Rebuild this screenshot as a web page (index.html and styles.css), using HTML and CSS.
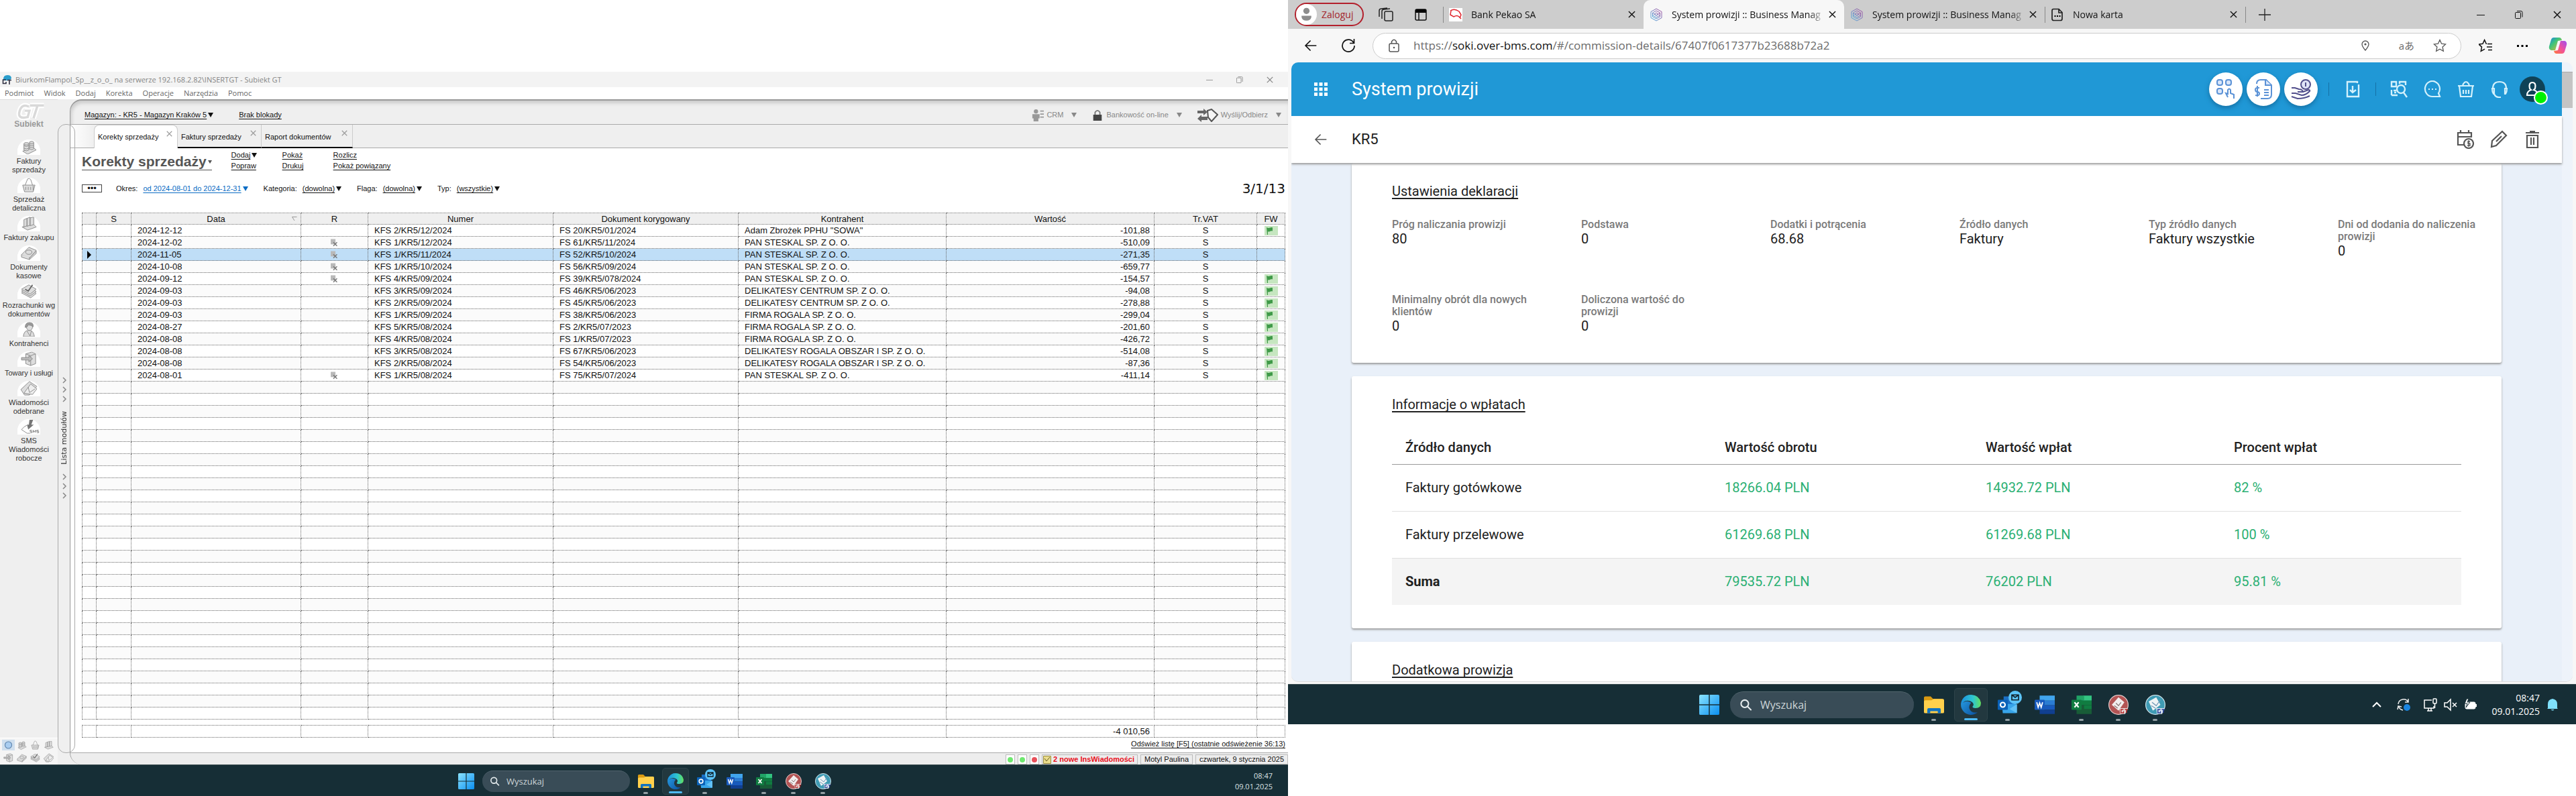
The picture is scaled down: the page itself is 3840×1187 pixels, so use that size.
FILE: index.html
```html
<!DOCTYPE html>
<html lang="pl">
<head>
<meta charset="utf-8">
<title>Pulpit</title>
<link rel="stylesheet" href="styles.css">
</head>
<body>
<svg class="defs" aria-hidden="true">
  <defs>
    <linearGradient id="win" x1="0" y1="0" x2="1" y2="1"><stop offset="0" stop-color="#8be3ff"/><stop offset="1" stop-color="#0a8ff0"/></linearGradient>
    <linearGradient id="edgeA" x1="0" y1="0" x2="1" y2="0"><stop offset="0" stop-color="#1b8fe0"/><stop offset=".6" stop-color="#2fc6cf"/><stop offset="1" stop-color="#63e05c"/></linearGradient>
    <linearGradient id="edgeB" x1="0" y1="0" x2="1" y2="1"><stop offset="0" stop-color="#2aa5ea"/><stop offset="1" stop-color="#0b4f9e"/></linearGradient>
    <linearGradient id="cop" x1="0" y1="0" x2="1" y2="1"><stop offset="0" stop-color="#1b7fe8"/><stop offset=".4" stop-color="#3fc47a"/><stop offset="1" stop-color="#f5b82e"/></linearGradient>
    <linearGradient id="cop2" x1="1" y1="0" x2="0" y2="1"><stop offset="0" stop-color="#a04df0"/><stop offset=".5" stop-color="#f0509c"/><stop offset="1" stop-color="#ff7a3a"/></linearGradient>
    <linearGradient id="hex" x1="0" y1="1" x2="1" y2="0"><stop offset="0" stop-color="#4cb2e0"/><stop offset="1" stop-color="#a3489c"/></linearGradient>
  </defs>
  <symbol id="i-win" viewBox="0 0 24 24"><path fill="url(#win)" d="M0 1.500Q0 0 1.500 0H11.400V11.400H0zM12.600 0H22.500Q24 0 24 1.500V11.400H12.600zM0 12.600H11.400V24H1.500Q0 24 0 22.500zM12.600 12.600H24V22.500Q24 24 22.500 24H12.600z"/></symbol>
  <symbol id="i-search" viewBox="0 0 24 24"><g fill="none" stroke="#e6ecee" stroke-width="2.600" stroke-linecap="round"><circle cx="10" cy="10" r="7"/><path d="M15.500 15.500L21.500 21.500"/></g></symbol>
  <symbol id="i-folder" viewBox="0 0 24 24"><path fill="#d99a12" d="M0 3.500Q0 2 1.500 2H8l3 3H22v6H0z"/><path fill="#ffd04c" d="M0 8Q0 6.500 2 6.500H9L11.500 5H22.500Q24 5 24 6.500V20.500Q24 22 22.500 22H1.500Q0 22 0 20.500z"/><path fill="#1173c0" d="M4 22V17.500Q4 16 5.500 16H18.500Q20 16 20 17.500V22H16.500V19.500H7.500V22z"/></symbol>
  <symbol id="i-edge" viewBox="0 0 24 24"><path fill="url(#edgeB)" d="M12 0A12 12 0 1 0 20 21Q12 22.500 10 16Q9.500 12 12.500 9.500Q6 5.500 1 11z"/><path fill="url(#edgeA)" d="M.3 10.500Q2.500 0 12.500 0Q22 .5 24 9.500Q24 16 17.500 16Q13.500 15.800 14 14Q16.500 11.500 13.500 8.700Q7 4.500.3 10.500z"/></symbol>
  <symbol id="i-outlook" viewBox="0 0 24 24"><path fill="#1a6fc4" d="M7 2H21V12H7z"/><path fill="#38a5ea" d="M5 11L22 11V22H6z"/><path fill="#61c1f5" d="M14 17L23 11V22z"/><rect y="6" width="12" height="12" rx="1" fill="#0a62b8"/><circle cx="6" cy="12" r="2.800" fill="none" stroke="#fff" stroke-width="1.700"/></symbol>
  <symbol id="i-word" viewBox="0 0 24 24"><path fill="#41a5ee" d="M6 1H24V7H6z"/><path fill="#2b7cd3" d="M6 7H24V12.500H6z"/><path fill="#185abd" d="M6 12.500H24V18H6z"/><path fill="#103f91" d="M6 18H24V23H6z"/><rect y="6" width="12" height="12" rx="1" fill="#185abd"/><path d="M2.500 9l1.700 6L6 9.800 7.800 15l1.700-6" fill="none" stroke="#fff" stroke-width="1.400"/></symbol>
  <symbol id="i-excel" viewBox="0 0 24 24"><path fill="#33c481" d="M14 1H24V7H14z"/><path fill="#21a366" d="M6 1H15V7H6z"/><path fill="#107c41" d="M6 7H24V12.500H6z"/><path fill="#185c37" d="M6 12.500H24V23H6z"/><path fill="#107c41" d="M15 12.500H24V17H15z"/><rect y="6" width="12" height="12" rx="1" fill="#107c41"/><path d="M3.500 9l5 6M8.500 9l-5 6" stroke="#fff" stroke-width="1.700"/></symbol>
  <symbol id="i-gtred" viewBox="0 0 24 24"><circle cx="12" cy="12" r="11.500" fill="#b35454" stroke="#e2cccc"/><path fill="#f2eeee" d="M4 12L12 3l7 6-7 10z"/><path d="M9 10l3 3 3-4M7 13l4 3" stroke="#8b7777" fill="none"/><path fill="#e8dada" d="M13 16h10l-3 7h-6z"/><path d="M18 17.500h-3v4h3v-2M19.500 17.500h4M21.500 17.500v4" stroke="#b32c2c" stroke-width="1.200" fill="none"/></symbol>
  <symbol id="i-gtblue" viewBox="0 0 24 24"><circle cx="12" cy="12" r="11.500" fill="#3f9bb4" stroke="#cfe3ea"/><path fill="#f0f4f5" d="M4 8l9-5 5 9-9 7z"/><path d="M8 9l5 4 5-7M7 13l5 3" stroke="#6e98b6" fill="none"/><path fill="#dde6f2" d="M13 16h10l-3 7h-6z"/><path d="M18 17.500h-3v4h3v-2M19.500 17.500h4M21.500 17.500v4" stroke="#273f94" stroke-width="1.200" fill="none"/></symbol>
  <symbol id="i-x" viewBox="0 0 12 12"><path d="M1 1l10 10M11 1L1 11" stroke="currentColor" stroke-width="1.500" fill="none"/></symbol>
  <symbol id="i-min" viewBox="0 0 12 12"><path d="M0 6.500h12" stroke="currentColor" fill="none"/></symbol>
  <symbol id="i-max" viewBox="0 0 12 12"><path d="M.5 3.500q0-1 1-1h6q1 0 1 1v7q0 1-1 1h-6q-1 0-1-1zM3 .5h6q2 0 2 2v7" stroke="currentColor" fill="none"/></symbol>
  <symbol id="i-hex" viewBox="0 0 20 20"><g fill="none" stroke="url(#hex)" stroke-width="1"><path d="M10 1l8 4.500v9L10 19l-8-4.500v-9z"/><path d="M10 4l5.500 3v6L10 16l-5.500-3V7z"/><path d="M5 8l5 3 5-3M5 11l5 3 5-3M10 7l3 2-3 2-3-2z"/></g></symbol>
  <symbol id="i-back" viewBox="0 0 24 24"><path d="M22 12H3M11.500 3L2.500 12l9 9" stroke="currentColor" stroke-width="2" fill="none"/></symbol>
  <symbol id="i-rx" viewBox="0 0 14 14"><path fill="#b9b9b9" d="M0 0h9v10H0z"/><path d="M5 6l7 7M12 6l-7 7" stroke="#777" stroke-width="1.800"/></symbol>
  <symbol id="i-flag" viewBox="0 0 20 14"><path fill="#c6e6c0" d="M0 0h20v14H0z"/><path fill="#3f9a48" d="M3 2q3 1.500 5 .5t4-.3v5.300q-2-.5-4 .5T5 8v5H4z"/></symbol>
  <symbol id="m-coins" viewBox="0 0 34 24"><g fill="#ddd" stroke="#888"><path d="M7 19l17-6 5 4-14 7z"/><path d="M9 7v10q4 3 8 0V7"/><ellipse cx="13" cy="7" rx="4" ry="2"/><path d="M18 5v10q4 3 7 0V5"/><ellipse cx="21.500" cy="5" rx="3.500" ry="2"/><path d="M9 10q4 3 8 0M9 14q4 3 8 0M18 9q4 2 7 0M18 12q4 2 7 0" fill="none"/></g></symbol>
  <symbol id="m-basket" viewBox="0 0 34 24"><g fill="#ddd" stroke="#888"><path d="M7 12h20l-3 11H10z"/><path d="M11 12L15 2q3-2 5 1l3 9" fill="none"/><path d="M12 15v5M16 15v5M20 15v5M24 13v8"/></g></symbol>
  <symbol id="m-docs" viewBox="0 0 34 24"><g fill="#ddd" stroke="#888"><path d="M6 18l18-5 5 5-14 5z"/><path d="M9 6l5-2v12l-5 2zM14 4l5-2v13l-5 2zM19 3l6-1v12l-6 2z"/></g></symbol>
  <symbol id="m-box" viewBox="0 0 34 24"><g fill="#ddd" stroke="#888"><path d="M5 15L17 3l12 5-11 13z"/><path d="M5 15v4l13 4v-4M18 21l11-12v4L18 23"/><ellipse cx="17" cy="11" rx="5" ry="3.500"/></g></symbol>
  <symbol id="m-check" viewBox="0 0 34 24"><g fill="#ddd" stroke="#888"><path d="M5 15l12-7 12 8-9 7z"/><path d="M5 12l12-7 12 8-10 7z"/><path d="M5 9l12-7 12 7-10 8z"/><path d="M11 9l5 3 7-10" fill="none" stroke="#666" stroke-width="2"/></g></symbol>
  <symbol id="m-person" viewBox="0 0 34 24"><g fill="#ddd" stroke="#888"><path d="M8 24q1-10 8-10h4q5 2 6 10z"/><ellipse cx="18" cy="8" rx="5" ry="6"/><path d="M11 9q0-8 7-8t6 7q-3-3-8-3-1 4-5 4z" fill="#999"/><path d="M14 15l5 8 2-8"/></g></symbol>
  <symbol id="m-goods" viewBox="0 0 34 24"><g fill="#ddd" stroke="#888"><path d="M12 4l10-3 6 3v16l-8 3-8-3z"/><path d="M12 4l8 3 8-3M20 7v16" fill="none"/><path d="M5 10h12v-3l6 5-6 5v-3H5z" fill="#bbb"/></g></symbol>
  <symbol id="m-mail" viewBox="0 0 34 24"><g fill="#ddd" stroke="#888"><path d="M4 14L18 1l12 8-12 14H10z"/><path d="M9 20L20 5l10 8-7 9z" fill="#eee"/><path d="M16 10l2 9 9-6" fill="none"/></g></symbol>
  <symbol id="m-sms" viewBox="0 0 34 24"><path d="M18 1h6l-3 8h4l-9 8-2-8h3z" fill="#777"/><path d="M5 17q5-6 9-7M5 17l9 6h5" fill="none" stroke="#888"/><path d="M22 18h-3v2h3v2h-3M24 22v-4l2 3 2-3v4M33 18h-3v2h3v2h-3" fill="none" stroke="#777"/></symbol>
</svg>

<main class="desk">
<section class="screen screen-left" aria-label="Subiekt GT">
  <header class="titlebar">
    <svg class="ic-14" viewBox="0 0 14 14"><path fill="#2a9dcc" d="M2 6q0-6 6-6t6 5l-3 3H2z"/><path d="M6 7H1.500v5.500H6V10M8 7.500h6M11 7.500V14" stroke="#334" stroke-width="1.600" fill="none"/></svg>
    <span class="titlebar-text">BiurkomFlampol_Sp__z_o_o_ na serwerze 192.168.2.82\INSERTGT - Subiekt GT</span>
    <div class="winbtns winbtns-sm"><button aria-label="Minimalizuj"><svg><use href="#i-min"/></svg></button><button aria-label="Przywróć"><svg><use href="#i-max"/></svg></button><button aria-label="Zamknij"><svg><use href="#i-x"/></svg></button></div>
  </header>
  <nav class="menubar"><a href="#">Podmiot</a><a href="#">Widok</a><a href="#">Dodaj</a><a href="#">Korekta</a><a href="#">Operacje</a><a href="#">Narzędzia</a><a href="#">Pomoc</a></nav>
  <div class="app">
    <aside class="modules">
      <div class="logo"><svg viewBox="0 0 60 30"><path d="M30 7q-12-6-16 8t14 10l3-11h-8M32 5h24M45 5l-7 22" fill="none" stroke="#fff" stroke-width="9"/><path d="M30 7q-12-6-16 8t14 10l3-11h-8M32 5h24M45 5l-7 22" fill="none" stroke="#d9d9d9" stroke-width="4"/></svg><b>Subiekt</b></div>
      <a class="module" href="#"><svg><use href="#m-coins"/></svg>Faktury<br>sprzedaży</a>
      <a class="module" href="#"><svg><use href="#m-basket"/></svg>Sprzedaż<br>detaliczna</a>
      <a class="module" href="#"><svg><use href="#m-docs"/></svg>Faktury zakupu</a>
      <a class="module" href="#"><svg><use href="#m-box"/></svg>Dokumenty<br>kasowe</a>
      <a class="module" href="#"><svg><use href="#m-check"/></svg>Rozrachunki wg<br>dokumentów</a>
      <a class="module" href="#"><svg><use href="#m-person"/></svg>Kontrahenci</a>
      <a class="module" href="#"><svg><use href="#m-goods"/></svg>Towary i usługi</a>
      <a class="module" href="#"><svg><use href="#m-mail"/></svg>Wiadomości<br>odebrane</a>
      <a class="module" href="#"><svg><use href="#m-sms"/></svg>SMS<br>Wiadomości<br>robocze</a>
      <div class="quick">
        <svg class="on" viewBox="0 0 34 24"><circle cx="17" cy="12" r="9" fill="#a9cdf0" stroke="#5b82ac" stroke-width="2"/></svg><svg><use href="#m-coins"/></svg><svg><use href="#m-basket"/></svg><svg><use href="#m-docs"/></svg><svg><use href="#m-goods"/></svg><svg><use href="#m-box"/></svg><svg><use href="#m-check"/></svg><svg><use href="#m-mail"/></svg>
      </div>
    </aside>
    <button class="strip"><svg class="chev" viewBox="0 0 8 38"><path d="M2 1l4 4-4 4M2 15l4 4-4 4M2 29l4 4-4 4" fill="none" stroke="#888" stroke-width="1.500"/></svg><span>Lista modułów</span><svg class="chev" viewBox="0 0 8 38"><path d="M2 1l4 4-4 4M2 15l4 4-4 4M2 29l4 4-4 4" fill="none" stroke="#888" stroke-width="1.500"/></svg></button>
    <div class="work">
      <div class="contextbar">
        <a class="lnk" href="#">Magazyn: - KR5 - Magazyn Kraków 5<i class="dn"></i></a>
        <a class="lnk" href="#">Brak blokady</a>
        <div class="ctx-right">
          <button><svg viewBox="0 0 20 20"><g fill="#999"><circle cx="7" cy="3.500" r="3.500"/><path d="M1 8h12v7h-2v5H3v-5H1z"/><path d="M14 2h6v2h-6zM14 7h6v2h-6zM14 12h6v2h-6z"/></g></svg>CRM<i class="dn"></i></button>
          <button><svg viewBox="0 0 20 20"><path d="M6 9V5q4-6 8 0v4" stroke="#777" stroke-width="2" fill="none"/><path d="M3 9h14v10H3z" fill="#444"/></svg>Bankowość on-line<i class="dn"></i></button>
          <button><svg class="wide" viewBox="0 0 32 20"><path d="M1 3h9V0l6 5-6 5V7H1zM16 12H7V9l-6 6 6 5v-3h9z" fill="#666"/><path d="M16 3l6-2 9 8-9 10-5-6z" fill="#f5f5f5" stroke="#555" stroke-width="2"/></svg>Wyślij/Odbierz<i class="dn"></i></button>
        </div>
      </div>
      <div class="doctabs">
        <a class="doctab active" href="#">Korekty sprzedaży<svg><use href="#i-x"/></svg></a>
        <a class="doctab" href="#">Faktury sprzedaży<svg><use href="#i-x"/></svg></a>
        <a class="doctab" href="#">Raport dokumentów<svg><use href="#i-x"/></svg></a>
      </div>
      <div class="doc">
        <div class="dochead">
          <h1>Korekty sprzedaży<i class="dn"></i></h1>
          <div class="actions"><a class="lnk" href="#">Dodaj<i class="dn"></i></a><a class="lnk" href="#">Pokaż</a><a class="lnk" href="#">Rozlicz</a><a class="lnk" href="#">Popraw</a><a class="lnk" href="#">Drukuj</a><a class="lnk" href="#">Pokaż powiązany</a></div>
        </div>
        <div class="filters">
          <button class="more">•••</button>
          <span>Okres:<a class="lnk blue" href="#">od 2024-08-01 do 2024-12-31<i class="dn"></i></a></span>
          <span>Kategoria:<a class="lnk" href="#">(dowolna)<i class="dn"></i></a></span>
          <span>Flaga:<a class="lnk" href="#">(dowolna)<i class="dn"></i></a></span>
          <span>Typ:<a class="lnk" href="#">(wszystkie)<i class="dn"></i></a></span>
          <span class="count">3/1/13</span>
        </div>
        <table class="grid">
          <colgroup><col class="c-a"><col class="c-b"><col class="c-c"><col class="c-d"><col class="c-e"><col class="c-e"><col class="c-f"><col class="c-f"><col class="c-g"><col class="c-h"></colgroup>
          <thead><tr><th></th><th>S</th><th>Data<svg class="sort" viewBox="0 0 8 7"><path d="M7.500.5H.5L4 6" fill="none" stroke="#999"/></svg></th><th>R</th><th>Numer</th><th>Dokument korygowany</th><th>Kontrahent</th><th>Wartość</th><th>Tr.VAT</th><th>FW</th></tr></thead>
          <tbody>
            <tr><td><td><td>2024-12-12<td><td>KFS 2/KR5/12/2024<td>FS 20/KR5/01/2024<td>Adam Zbrożek PPHU "SOWA"<td>-101,88<td>S<td><svg><use href="#i-flag"/></svg>
            <tr><td><td><td>2024-12-02<td><svg><use href="#i-rx"/></svg><td>KFS 1/KR5/12/2024<td>FS 61/KR5/11/2024<td>PAN STESKAL SP. Z O. O.<td>-510,09<td>S<td>
            <tr class="sel"><td><svg class="cur" viewBox="0 0 6 12"><path d="M0 0l6 6-6 6z"/></svg><td><td>2024-11-05<td><svg><use href="#i-rx"/></svg><td>KFS 1/KR5/11/2024<td>FS 52/KR5/10/2024<td>PAN STESKAL SP. Z O. O.<td>-271,35<td>S<td>
            <tr><td><td><td>2024-10-08<td><svg><use href="#i-rx"/></svg><td>KFS 1/KR5/10/2024<td>FS 56/KR5/09/2024<td>PAN STESKAL SP. Z O. O.<td>-659,77<td>S<td>
            <tr><td><td><td>2024-09-12<td><svg><use href="#i-rx"/></svg><td>KFS 4/KR5/09/2024<td>FS 39/KR5/078/2024<td>PAN STESKAL SP. Z O. O.<td>-154,57<td>S<td><svg><use href="#i-flag"/></svg>
            <tr><td><td><td>2024-09-03<td><td>KFS 3/KR5/09/2024<td>FS 46/KR5/06/2023<td>DELIKATESY CENTRUM SP. Z O. O.<td>-94,08<td>S<td><svg><use href="#i-flag"/></svg>
            <tr><td><td><td>2024-09-03<td><td>KFS 2/KR5/09/2024<td>FS 45/KR5/06/2023<td>DELIKATESY CENTRUM SP. Z O. O.<td>-278,88<td>S<td><svg><use href="#i-flag"/></svg>
            <tr><td><td><td>2024-09-03<td><td>KFS 1/KR5/09/2024<td>FS 38/KR5/06/2023<td>FIRMA ROGALA SP. Z O. O.<td>-299,04<td>S<td><svg><use href="#i-flag"/></svg>
            <tr><td><td><td>2024-08-27<td><td>KFS 5/KR5/08/2024<td>FS 2/KR5/07/2023<td>FIRMA ROGALA SP. Z O. O.<td>-201,60<td>S<td><svg><use href="#i-flag"/></svg>
            <tr><td><td><td>2024-08-08<td><td>KFS 4/KR5/08/2024<td>FS 1/KR5/07/2023<td>FIRMA ROGALA SP. Z O. O.<td>-426,72<td>S<td><svg><use href="#i-flag"/></svg>
            <tr><td><td><td>2024-08-08<td><td>KFS 3/KR5/08/2024<td>FS 67/KR5/06/2023<td>DELIKATESY ROGALA OBSZAR I SP. Z O. O.<td>-514,08<td>S<td><svg><use href="#i-flag"/></svg>
            <tr><td><td><td>2024-08-08<td><td>KFS 2/KR5/08/2024<td>FS 54/KR5/06/2023<td>DELIKATESY ROGALA OBSZAR I SP. Z O. O.<td>-87,36<td>S<td><svg><use href="#i-flag"/></svg>
            <tr><td><td><td>2024-08-01<td><svg><use href="#i-rx"/></svg><td>KFS 1/KR5/08/2024<td>FS 75/KR5/07/2024<td>PAN STESKAL SP. Z O. O.<td>-411,14<td>S<td><svg><use href="#i-flag"/></svg>
            <tr><td><td><td><td><td><td><td><td><td><td>
            <tr><td><td><td><td><td><td><td><td><td><td>
            <tr><td><td><td><td><td><td><td><td><td><td>
            <tr><td><td><td><td><td><td><td><td><td><td>
            <tr><td><td><td><td><td><td><td><td><td><td>
            <tr><td><td><td><td><td><td><td><td><td><td>
            <tr><td><td><td><td><td><td><td><td><td><td>
            <tr><td><td><td><td><td><td><td><td><td><td>
            <tr><td><td><td><td><td><td><td><td><td><td>
            <tr><td><td><td><td><td><td><td><td><td><td>
            <tr><td><td><td><td><td><td><td><td><td><td>
            <tr><td><td><td><td><td><td><td><td><td><td>
            <tr><td><td><td><td><td><td><td><td><td><td>
            <tr><td><td><td><td><td><td><td><td><td><td>
            <tr><td><td><td><td><td><td><td><td><td><td>
            <tr><td><td><td><td><td><td><td><td><td><td>
            <tr><td><td><td><td><td><td><td><td><td><td>
            <tr><td><td><td><td><td><td><td><td><td><td>
            <tr><td><td><td><td><td><td><td><td><td><td>
            <tr><td><td><td><td><td><td><td><td><td><td>
            <tr><td><td><td><td><td><td><td><td><td><td>
            <tr><td><td><td><td><td><td><td><td><td><td>
            <tr><td><td><td><td><td><td><td><td><td><td>
            <tr><td><td><td><td><td><td><td><td><td><td>
            <tr><td><td><td><td><td><td><td><td><td><td>
            <tr><td><td><td><td><td><td><td><td><td><td>
            <tr><td><td><td><td><td><td><td><td><td><td>
            <tr><td><td><td><td><td><td><td><td><td><td>
          </tbody>
        </table>
        <table class="grid total">
          <colgroup><col class="c-a"><col class="c-b"><col class="c-c"><col class="c-d"><col class="c-e"><col class="c-e"><col class="c-f"><col class="c-f"><col class="c-g"><col class="c-h"></colgroup>
          <tbody><tr><td><td><td><td><td><td><td><td>-4 010,56<td><td></tbody>
        </table>
        <a class="lnk refresh" href="#">Odśwież listę [F5] (ostatnie odświeżenie 36:13)</a>
      </div>
      <footer class="status">
        <span class="led"><i></i></span><span class="led"><i></i></span><span class="led red"><i></i></span>
        <span class="msg"><svg viewBox="0 0 12 12"><path d="M.5.5h11v11H.5z" fill="#eadc8c" stroke="#9a8c3a"/><path d="M2 4l3 4 5-6" fill="none" stroke="#665c22"/></svg>2 nowe InsWiadomości</span>
        <span>Motyl Paulina</span><span>czwartek, 9 stycznia 2025</span>
      </footer>
    </div>
  </div>
  <footer class="taskbar small">
    <div class="launch">
      <button class="start" aria-label="Start"><svg><use href="#i-win"/></svg></button>
      <label class="find"><svg><use href="#i-search"/></svg><input type="text" placeholder="Wyszukaj" aria-label="Wyszukaj"></label>
      <button class="tk run" aria-label="Eksplorator"><svg><use href="#i-folder"/></svg></button>
      <button class="tk act" aria-label="Edge"><svg><use href="#i-edge"/></svg></button>
      <button class="tk run" aria-label="Outlook"><svg><use href="#i-outlook"/></svg><svg class="badge" viewBox="0 0 16 16"><circle cx="8" cy="8" r="8" fill="#5cc4f8"/><path d="M4 5h8v6H4zl4 3 4-3" fill="none" stroke="#10222b" stroke-width="1.300"/></svg></button>
      <button class="tk" aria-label="Word"><svg><use href="#i-word"/></svg></button>
      <button class="tk run" aria-label="Excel"><svg><use href="#i-excel"/></svg></button>
      <button class="tk run" aria-label="Rewizor GT"><svg><use href="#i-gtred"/></svg></button>
      <button class="tk run" aria-label="Subiekt GT"><svg><use href="#i-gtblue"/></svg></button>
    </div>
    <div class="tray"><time>08:47<br>09.01.2025</time></div>
  </footer>
</section>

<section class="screen screen-right" aria-label="Przeglądarka">
  <header class="tabbar">
    <div class="tabtools">
      <button class="login"><svg viewBox="0 0 30 30"><circle cx="15" cy="15" r="15" fill="#fff"/><circle cx="15" cy="10" r="4.500" fill="#8c8c8c"/><path d="M8 17h14v2q-1 5-7 5t-7-5z" fill="#8c8c8c"/></svg>Zaloguj</button>
      <button aria-label="Obszary robocze"><svg class="ic-22" viewBox="0 0 22 22"><g fill="none" stroke="#222" stroke-width="1.500"><rect x="9" y="6" width="12" height="14" rx="2"/><path d="M5 17V6q0-3 3-3l9-1M1 14V5q0-3 3-3l9-1"/></g></svg></button>
      <button aria-label="Karty pionowe"><svg class="ic-18" viewBox="0 0 18 18"><rect x="1" y="1" width="16" height="16" rx="2" fill="none" stroke="#111" stroke-width="1.500"/><path d="M1 1h16v5H1z"/><path d="M6 5v12" stroke="#111" stroke-width="1.500"/></svg></button>
    </div>
    <div class="btab"><svg class="ic-20" viewBox="0 0 20 20"><path fill="#fff" d="M0 0h20v20H0z"/><path d="M2 4q6-4 13 1l3 5-2 5M3 4l-1 6 5 3q5-3 8 0l3 3" fill="none" stroke="#e0242c" stroke-width="1.500"/></svg><a href="#">Bank Pekao SA</a><button aria-label="Zamknij kartę"><svg><use href="#i-x"/></svg></button></div>
    <div class="btab current"><svg class="ic-20"><use href="#i-hex"/></svg><a href="#">System prowizji :: Business Manag</a><button aria-label="Zamknij kartę"><svg><use href="#i-x"/></svg></button></div>
    <div class="btab noline"><svg class="ic-20"><use href="#i-hex"/></svg><a href="#">System prowizji :: Business Manag</a><button aria-label="Zamknij kartę"><svg><use href="#i-x"/></svg></button></div>
    <div class="btab"><svg class="ic-20" viewBox="0 0 20 20"><path d="M4 1.500h8l5 5V16q0 2.500-2.500 2.500h-10Q2 18.500 2 16V4q0-2.500 2-2.500zM12 2v5h5" fill="none" stroke="#222" stroke-width="1.700"/><path d="M5.500 11h2v2h-2zM9 11h2v2H9zM12.500 11h2v2h-2z"/></svg><a href="#">Nowa karta</a><button aria-label="Zamknij kartę"><svg><use href="#i-x"/></svg></button></div>
    <button class="plus" aria-label="Nowa karta"><svg class="ic-18" viewBox="0 0 18 18"><path d="M9 0v18M0 9h18" stroke="#222" stroke-width="1.300"/></svg></button>
    <div class="winbtns"><button aria-label="Minimalizuj"><svg><use href="#i-min"/></svg></button><button aria-label="Przywróć"><svg><use href="#i-max"/></svg></button><button aria-label="Zamknij"><svg><use href="#i-x"/></svg></button></div>
  </header>
  <div class="urlrow">
    <button aria-label="Wstecz"><svg class="ic-20"><use href="#i-back"/></svg></button>
    <button aria-label="Odśwież"><svg class="ic-20" viewBox="0 0 20 20"><path d="M18 6A9 9 0 1 0 19 10M18.500 0v6.500H12" fill="none" stroke="#111" stroke-width="1.700"/></svg></button>
    <div class="url">
      <svg class="ic-20" viewBox="0 0 20 20"><g fill="none" stroke="#555" stroke-width="1.500"><rect x="3" y="7" width="14" height="12" rx="2"/><path d="M6.500 7V4q3.500-5.500 7 0v3"/></g><circle cx="10" cy="13" r="1.300" fill="#555"/></svg>
      <a href="#">https://<b>soki.over-bms.com</b>/#/commission-details/67407f0617377b23688b72a2</a>
      <svg class="ic-16 pin" viewBox="0 0 16 16"><path d="M8 15Q3 9 3 6a5 5 0 0 1 10 0q0 3-5 9z" fill="none" stroke="#555" stroke-width="1.300"/><circle cx="8" cy="6" r="1.600" fill="#555"/></svg>
      <span class="tr">aあ</span>
      <svg class="ic-20" viewBox="0 0 20 20"><path d="M10 1.500l2.600 5.700 6 .7-4.500 4.200 1.200 6.200L10 15.200l-5.300 3.100 1.200-6.200L1.400 7.900l6-.7z" fill="none" stroke="#555" stroke-width="1.300"/></svg>
    </div>
    <button class="favs" aria-label="Ulubione"><svg class="ic-20" viewBox="0 0 20 20"><path d="M12 7.200h-.8L8.600 1.500 6 7.200l-6 .7 4.500 4.200-1.200 6.200L9 15.200M13 7.500h7M12 12h8M14 16.500h6" fill="none" stroke="#111" stroke-width="1.500"/></svg></button>
    <button aria-label="Więcej"><svg class="ic-18" viewBox="0 0 18 18"><path d="M1 8h3v3H1zM7.500 8h3v3h-3zM14 8h3v3h-3z"/></svg></button>
    <button class="copilot" aria-label="Copilot"><svg class="ic-28" viewBox="0 0 28 28"><path d="M8 2h8q3 0 4 4l-6 1-4 14H4q-4-1-3-6L4 5q1-3 4-3z" fill="url(#cop)"/><path d="M20 26h-8q-3 0-4-4l6-1 4-14h6q4 1 3 6l-3 10q-1 3-4 3z" fill="url(#cop2)"/></svg></button>
  </div>
  <div class="view">
    <div class="page">
      <header class="apphead">
        <button aria-label="Menu"><svg class="ic-20" viewBox="0 0 20 20"><path fill="#fff" d="M0 0h5v5H0zM7.500 0h5v5h-5zM15 0h5v5h-5zM0 7.500h5v5H0zM7.500 7.500h5v5h-5zM15 7.500h5v5h-5zM0 15h5v5H0zM7.500 15h5v5h-5zM15 15h5v5h-5z"/></svg></button>
        <h2>System prowizji</h2>
        <div class="rounds">
          <button aria-label="Moduły"><svg viewBox="0 0 30 30"><g fill="#d9e6fa" stroke="#5b92d6" stroke-width="2"><rect x="2" y="1" width="8" height="8" rx="3"/><rect x="15" y="1" width="8" height="8" rx="3"/><rect x="2" y="14" width="8" height="8" rx="3"/><path d="M18 27l-3-6 3 1v-6q2-3 4 0v5l5 2v6" fill="none"/></g></svg></button>
          <button aria-label="Faktury"><svg viewBox="0 0 30 30"><g fill="none" stroke="#5b92d6" stroke-width="2"><path d="M5 7q0-6 6-6h8l8 8v14q0 6-6 6H11"/><path d="M18 1v8h9" fill="#d9e6fa"/><path d="M9 13q-6-1-6 2.500T6 19t3 3-6 2M6 10v16M16 16h7M16 20h7M16 24h7"/></g></svg></button>
          <button aria-label="Prowizje"><svg viewBox="0 0 30 30"><g fill="none" stroke="#524f8c" stroke-width="2"><circle cx="22" cy="8" r="7" fill="#dfe3f7"/><path d="M22 5v6M1 13h5l6 2q5 0 6 4h-8M18 19l8-3q3 0 2 2-6 6-12 6L7 21H1M1 26l9 3q10 0 18-4"/></g></svg></button>
        </div>
        <div class="tools">
          <i class="bar"></i>
          <button aria-label="Pobierz"><svg viewBox="0 0 26 26"><g fill="none" stroke="#d3f1fc" stroke-width="2.400"><path d="M20 4V2H5v22h17V6M13 8v10M9 14l4 4 5-4"/></g></svg></button>
          <i class="bar second"></i>
          <button aria-label="Skanuj"><svg viewBox="0 0 26 26"><g fill="none" stroke="#d3f1fc" stroke-width="2.400"><path d="M2 2h7v7H2zM14 5V2h9v5M2 22v-8M5 15h4M2 22h9M6 18h3"/><circle cx="16" cy="13" r="6"/><path d="M20 18l5 7"/></g></svg></button>
          <button aria-label="Czat"><svg viewBox="0 0 26 26"><path d="M24 24H13A11 11.500 0 1 1 22 19z" fill="none" stroke="#d3f1fc" stroke-width="2.200"/><path d="M7 12h2v2H7zM12 12h2v2h-2zM17 12h2v2h-2z" fill="#d3f1fc"/></svg></button>
          <button aria-label="Koszyk"><svg viewBox="0 0 26 26"><path d="M1 8h24M3 8l2 16h16l2-16M8 8l1-3q4-6 8 0l1 3M9 14v6M13 14v6M17 14v6" fill="none" stroke="#d3f1fc" stroke-width="2.200"/></svg></button>
          <button aria-label="Pomoc"><svg viewBox="0 0 26 26"><path d="M3 12q0-10 10-10t10 10M2 12h3v8H4q-2-3-2-8zM24 12h-3v8h1q2-3 2-8zM5 20q2 5 7 5h3" fill="none" stroke="#d3f1fc" stroke-width="2.200"/></svg></button>
          <button class="avatar" aria-label="Konto"><svg viewBox="0 0 26 26"><path d="M9 12q-2-9 4-9t4 9l-2 2q6 2 6 8H5q0-6 6-8z" fill="none" stroke="#fff" stroke-width="2.200"/></svg></button>
        </div>
      </header>
      <div class="subhead">
        <button aria-label="Wróć"><svg class="ic-20"><use href="#i-back"/></svg></button>
        <h3>KR5</h3>
        <div class="edit">
          <button aria-label="Okres"><svg viewBox="0 0 26 28"><g fill="none" stroke="#555" stroke-width="2.200"><path d="M12 22H2V4h20v7M2 10h20M6 0v5M18 0v5"/><circle cx="18" cy="20" r="7" fill="#fff"/><path d="M20 17h-3v3h3v3h-4M18 15v10" stroke-width="1.300"/></g></svg></button>
          <button aria-label="Edytuj"><svg viewBox="0 0 26 28"><path d="M2 25l1-9L18 2l6 6L9 23zM9 17l8-8" fill="none" stroke="#555" stroke-width="2.200"/></svg></button>
          <button aria-label="Usuń"><svg viewBox="0 0 26 28"><path d="M3 4h20M9 2h8M5 8h16v18H5zM11 11v11M15 11v11" fill="none" stroke="#555" stroke-width="2.200"/></svg></button>
        </div>
      </div>
      <div class="cards">
        <article class="card first">
          <h4>Ustawienia deklaracji</h4>
          <dl class="fields">
            <div><dt>Próg naliczania prowizji</dt><dd>80</dd></div>
            <div><dt>Podstawa</dt><dd>0</dd></div>
            <div><dt>Dodatki i potrącenia</dt><dd>68.68</dd></div>
            <div><dt>Źródło danych</dt><dd>Faktury</dd></div>
            <div><dt>Typ źródło danych</dt><dd>Faktury wszystkie</dd></div>
            <div><dt>Dni od dodania do naliczenia prowizji</dt><dd>0</dd></div>
            <div><dt>Minimalny obrót dla nowych klientów</dt><dd>0</dd></div>
            <div><dt>Doliczona wartość do prowizji</dt><dd>0</dd></div>
          </dl>
        </article>
        <article class="card">
          <h4>Informacje o wpłatach</h4>
          <table class="pay">
            <colgroup><col class="p-a"><col class="p-b"><col class="p-c"><col></colgroup>
            <thead><tr><th>Źródło danych</th><th>Wartość obrotu</th><th>Wartość wpłat</th><th>Procent wpłat</th></tr></thead>
            <tbody>
              <tr><td>Faktury gotówkowe</td><td>18266.04 PLN</td><td>14932.72 PLN</td><td>82 %</td></tr>
              <tr><td>Faktury przelewowe</td><td>61269.68 PLN</td><td>61269.68 PLN</td><td>100 %</td></tr>
              <tr class="sum"><td>Suma</td><td>79535.72 PLN</td><td>76202 PLN</td><td>95.81 %</td></tr>
            </tbody>
          </table>
        </article>
        <article class="card">
          <h4>Dodatkowa prowizja</h4>
        </article>
      </div>
    </div>
    <div class="scroll"><i></i></div>
  </div>
  <footer class="taskbar">
    <div class="launch">
      <button class="start" aria-label="Start"><svg><use href="#i-win"/></svg></button>
      <label class="find"><svg><use href="#i-search"/></svg><input type="text" placeholder="Wyszukaj" aria-label="Wyszukaj"></label>
      <button class="tk run" aria-label="Eksplorator"><svg><use href="#i-folder"/></svg></button>
      <button class="tk act" aria-label="Edge"><svg><use href="#i-edge"/></svg></button>
      <button class="tk run" aria-label="Outlook"><svg><use href="#i-outlook"/></svg><svg class="badge" viewBox="0 0 16 16"><circle cx="8" cy="8" r="8" fill="#5cc4f8"/><path d="M4 5h8v6H4zl4 3 4-3" fill="none" stroke="#10222b" stroke-width="1.300"/></svg></button>
      <button class="tk" aria-label="Word"><svg><use href="#i-word"/></svg></button>
      <button class="tk run" aria-label="Excel"><svg><use href="#i-excel"/></svg></button>
      <button class="tk run" aria-label="Rewizor GT"><svg><use href="#i-gtred"/></svg></button>
      <button class="tk run" aria-label="Subiekt GT"><svg><use href="#i-gtblue"/></svg></button>
    </div>
    <div class="tray">
      <svg class="t-chev" viewBox="0 0 20 20"><path d="M4 13l6-6 6 6" fill="none" stroke="#fff" stroke-width="2"/></svg>
      <svg class="t-sync" viewBox="0 0 20 20"><path d="M2 9a8 8 0 0 1 15-3M17 1v5h-5M9 18q-5-1-6-5M1 17l1-5 5 1" fill="none" stroke="#eee" stroke-width="1.500"/><circle cx="15" cy="14" r="5" fill="#1b86e0"/></svg>
      <svg viewBox="0 0 20 20"><path d="M12 3H1v12h14v-3M5 19h8M7 15v4M11 15v4" fill="none" stroke="#fff" stroke-width="1.500"/><rect x="14" y="1" width="5" height="7" rx="1" fill="none" stroke="#fff" stroke-width="1.500"/><path d="M16.500 8v7" stroke="#fff" stroke-width="1.500"/></svg>
      <svg viewBox="0 0 20 20"><path d="M1 7h4l5-5v16l-5-5H1zM13 7l6 6M19 7l-6 6" fill="none" stroke="#fff" stroke-width="1.500"/></svg>
      <svg viewBox="0 0 20 20"><rect x="2" y="6" width="15" height="10" rx="2" fill="#fff" stroke="#fff"/><path d="M18 9v4" stroke="#fff" stroke-width="2"/><path d="M4 1L1 8h4l-2 6 6-8H5l2-5z" fill="#fff" stroke="#162e36"/></svg>
      <time>08:47<br>09.01.2025</time>
      <svg class="bell" viewBox="0 0 20 20"><path d="M3 15V9q0-7 7-8 7 1 7 8v6l1 1H2zM7.500 17h5q-2 3-5 0z" fill="#7fe0fb"/></svg>
    </div>
  </footer>
</section>
</main>
</body>
</html>
```
FILE: styles.css
```css
* { box-sizing: border-box; }
body { margin: 0; background: #fff; color: #111; font: 11px/13px "Liberation Sans", Arial, sans-serif; }
.defs { position: absolute; width: 0; height: 0; }
button { border: 0; padding: 0; background: none; font: inherit; color: inherit; display: flex; align-items: center; justify-content: center; }
a { color: inherit; text-decoration: none; }
h1, h2, h3, h4, dl, dd { margin: 0; font-weight: 400; }
svg { display: block; flex: none; }
.ic-14 { width: 14px; height: 14px; }
.ic-16 { width: 16px; height: 16px; }
.ic-18 { width: 18px; height: 18px; }
.ic-20 { width: 20px; height: 20px; }
.ic-22 { width: 22px; height: 22px; }
.ic-28 { width: 28px; height: 28px; }

.desk { display: grid; grid-template-columns: 1fr 1fr; align-items: start; }
.screen { display: flex; flex-direction: column; min-width: 0; }
.screen-left { min-height: 100vh; padding-top: 107px; }
.screen-right { aspect-ratio: 16 / 9; overflow: hidden; background: #f7f7f7; }

/* Subiekt GT */
.titlebar { display: flex; align-items: center; height: 23px; padding: 0 5px 0 3px; gap: 6px; background: #f3f3f3; color: #858585; font: 11px/16px "Open Sans", sans-serif; }
.winbtns { display: flex; margin-left: auto; }
.winbtns button { width: 57px; height: 43px; }
.winbtns svg { width: 12px; height: 12px; }
.winbtns-sm button { width: 45px; height: 22px; }
.winbtns-sm svg { width: 10px; height: 10px; }
.menubar { display: flex; align-items: center; height: 18px; padding: 0 7px; gap: 15px; color: #666; font: 11px/16px "Open Sans", sans-serif; }
.app { flex: 1; display: flex; background: #efefef; }
.modules { width: 86px; display: flex; flex-direction: column; align-items: center; color: #333; text-align: center; border-top: 1px solid #ddd; }
.logo { height: 59px; padding-top: 4px; color: #999; font-size: 12px; }
.logo svg { width: 60px; height: 26px; }
.module { width: 86px; padding-bottom: 5px; }
.module svg { width: 34px; height: 22px; margin: 0 auto 4px; background: #fff; border-radius: 17px 17px 0 0; box-shadow: 0 1px 0 #fff; }
.quick { margin-top: auto; width: 86px; height: 40px; padding: 0 3px; display: grid; grid-template-columns: repeat(4, 20px); background: #f5f5f5; border-top: 1px solid #fff; align-items: center; }
.quick svg { width: 19px; height: 16px; }
.quick .on { background: #cfdfee; }
.strip { width: 26px; margin: 37px -8px 17px 0; z-index: 1; flex-direction: column; justify-content: flex-start; align-items: flex-start; padding: 376px 0 0 3px; gap: 13px; border: 1px solid #aaa; border-radius: 12px; color: #333; }
.strip span { writing-mode: vertical-rl; transform: rotate(180deg); font: 11px/11px "DejaVu Sans", sans-serif; }
.strip .chev { width: 8px; height: 38px; margin-left: 2px; }
.work { flex: 1; min-width: 0; display: flex; flex-direction: column; background: #efefef; border-top: 2px solid #999; border-left: 1px solid #999; border-radius: 18px 0 0 18px; overflow: hidden; box-shadow: inset 2px 4px 5px #ccc; }
.dn { display: inline-block; border: 4px solid transparent; border-top: 7px solid currentColor; border-bottom: 0; margin-left: 2px; }
.lnk { text-decoration: underline; text-decoration-skip-ink: none; text-underline-offset: 2px; justify-self: start; }
.contextbar { display: flex; align-items: center; height: 36px; padding: 8px 10px 0 21px; gap: 38px; border-bottom: 1px solid #aaa; }
.ctx-right { margin-left: auto; display: flex; gap: 22px; color: #888; }
.ctx-right svg { width: 18px; height: 20px; margin-right: 4px; }
.ctx-right .wide { width: 32px; }
.ctx-right .dn { margin-left: 12px; }
.doctabs { display: flex; height: 35px; padding-left: 35px; border-bottom: 1px solid #aaa; background: linear-gradient(90deg, #fff, #efefef 35px); }
.doctab { position: relative; width: 125px; height: 35px; padding: 12px 0 0 5px; border-bottom: 2px solid #000; border-right: 1px solid #ccc; }
.doctab:last-child { width: 136px; }
.doctab svg { position: absolute; right: 7px; top: 8px; width: 9px; height: 9px; color: #999; }
.doctab.active { background: #fff; border: 1px solid #ccc; border-bottom: 0; border-radius: 8px 8px 0 0; padding-top: 11px; }
.doc { flex: 1; display: flex; flex-direction: column; background: #fff; padding: 0 4px 0 17px; border-bottom: 1px solid #aaa; }
.dochead { display: flex; height: 48px; gap: 29px; padding-top: 4px; }
h1 { font-weight: 700; font-size: 21px; line-height: 24px; height: 25px; margin-top: 4px; color: #555; border-bottom: 1px solid #555; align-self: flex-start; }
h1 .dn { vertical-align: 4px; border-top-width: 5px; border-left-width: 3px; border-right-width: 3px; }
.actions { display: grid; grid-template-columns: 76px 76px auto; grid-auto-rows: 16px; }
.filters { display: flex; align-items: center; height: 24px; margin-bottom: 24px; gap: 23px; }
.filters .lnk { margin-left: 8px; }
.more { width: 30px; height: 12px; border: 1px solid #444; font-size: 13px; line-height: 10px; }
.more + span { margin-left: -2px; }
.blue { color: #0a6cc4; }
.count { margin-left: auto; font: 20px/24px "DejaVu Sans", sans-serif; }
.grid { width: 100%; table-layout: fixed; border-collapse: collapse; font-size: 13px; line-height: 16px; }
.grid th, .grid td { height: 18px; padding: 0 9px; border: 1px dotted #666; font-weight: 400; white-space: nowrap; }
.grid th { background: #efefef; height: 17px; line-height: 15px; position: relative; }
.grid tbody tr:nth-child(even) { background: #fbfbfb; }
.grid .sel td { background: #bfdef7; }
.grid td:nth-child(8) { text-align: right; padding-right: 6px; }
.grid td:nth-child(9), .grid td:nth-child(4) { text-align: center; }
.grid td svg { width: 11px; height: 12px; margin: 0 auto; }
.grid td:last-child svg { width: 20px; height: 14px; margin-left: 4px; }
.grid td:last-child, .grid th:last-child, .grid td:first-child { padding: 0 7px; }
.grid td .cur { width: 6px; height: 12px; margin: 0; }
.grid .sort { position: absolute; right: 5px; top: 5px; width: 8px; height: 7px; }
.c-a { width: 21px; } .c-b { width: 52px; } .c-c { width: 253px; } .c-d { width: 100px; } .c-e { width: 276px; }
.c-f { width: 310px; } .c-g { width: 153px; } .c-h { width: 42px; }
.total { margin-top: 8px; }
.refresh { align-self: flex-end; margin: 3px 0 6px; }
.status { height: 17px; display: flex; justify-content: flex-end; align-items: flex-end; gap: 4px; background: #ededed; }
.status span { height: 15px; padding: 0 5px; border: 1px solid #bbb; display: flex; align-items: center; gap: 3px; }
.status .led { width: 14px; background: #fff; justify-content: center; padding: 0; }
.led i { width: 8px; height: 8px; border-radius: 50%; background: #6fe86f; }
.led.red i { background: #e8505a; }
.status .msg { color: #e8101c; font-weight: 700; padding: 0 4px 0 1px; }
.msg svg { width: 12px; height: 12px; }

/* Windows taskbar */
.taskbar { position: relative; height: 60px; flex: none; display: flex; align-items: center; justify-content: flex-end; background: #162e36; border-top: 1px solid #3a4c50; color: #fff; font: 14px/20px "Open Sans", sans-serif; }
.launch { margin: 0 auto 0 603px; display: flex; align-items: center; }
.launch .start { width: 50px; height: 50px; }
.start svg, .tk > svg:first-child { width: 30px; height: 30px; }
.find { display: flex; align-items: center; width: 274px; height: 40px; margin: 0 5px 0 6px; padding: 0 14px; gap: 12px; border-radius: 20px; background: #394c57; border-top: 1px solid #53656e; }
.find svg { width: 19px; height: 20px; }
.find input { flex: 1; min-width: 0; border: 0; padding: 0; background: none; font: 16px/20px "Open Sans", sans-serif; }
.find input::placeholder { color: #cdd5d8; opacity: 1; }
.tk { position: relative; width: 50px; height: 50px; margin-right: 5px; border-radius: 5px; }
.tk.act { background: #22383f; border: 1px solid #2d434a; }
.tk.run::after, .tk.act::after { content: ""; position: absolute; bottom: 1px; left: calc(50% - 4px); width: 7px; height: 3px; border-radius: 2px; background: #93a0a5; }
.tk.act::after { left: calc(50% - 10px); width: 20px; background: #4fbbf8; }
.tk .badge { position: absolute; right: 4px; top: 4px; width: 20px; height: 20px; }
.tray { display: flex; align-items: center; text-align: right; padding-right: 25px; }
.tray svg { width: 20px; height: 20px; margin-right: 10px; }
.tray .t-chev, .tray .t-sync { margin-right: 20px; }
.tray time { margin-left: 12px; }
.tray .bell { margin: 0 0 0 9px; }
.small { height: 48px; font-size: 11px; line-height: 16px; }
.small .launch { margin-left: 675px; }
.small .start, .small .tk { width: 40px; height: 40px; }
.small .start svg, .small .tk > svg:first-child { width: 24px; height: 24px; }
.small .find { width: 220px; height: 32px; margin: 0 4px; padding: 0 11px; gap: 10px; }
.small .find svg { width: 15px; height: 16px; }
.small .find input { font-size: 13px; }
.small .tk { margin-right: 4px; }
.small .tk .badge { width: 16px; height: 16px; right: 4px; top: 2px; }
.small .tray { padding-right: 23px; color: #dde3e5; }

/* Browser */
.tabbar { display: flex; height: 43px; flex: none; background: #cdcdcd; font: 14px/20px "Open Sans", sans-serif; }
.tabtools { width: 231px; padding-left: 10px; display: flex; align-items: center; gap: 22px; }
.tabtools > :last-child { margin-left: 10px; }
.login { width: 103px; height: 35px; border: 2px solid #b3202c; border-radius: 18px; color: #a4262c; justify-content: flex-start; gap: 7px; }
.login svg { width: 31px; height: 31px; }
.btab { width: 299px; display: flex; align-items: center; padding: 0 12px 0 9px; gap: 13px; position: relative; }
.btab::before { content: ""; position: absolute; left: 0; top: 10px; width: 1px; height: 24px; background: #888; }
.btab.current::before, .btab.noline::before { display: none; }
.btab a { flex: 1; min-width: 0; white-space: nowrap; margin-right: -8px; -webkit-mask-image: linear-gradient(90deg, #000 90%, transparent); mask-image: linear-gradient(90deg, #000 90%, transparent); }
.btab button { width: 12px; height: 12px; }
.btab button svg { width: 11px; height: 11px; }
.btab.current { background: #f7f7f7; border-radius: 10px 10px 0 0; }
.plus { width: 56px; border-left: 1px solid #888; margin: 10px 0 9px; }
.urlrow { display: flex; align-items: center; height: 50px; flex: none; padding: 0 13px 0 24px; gap: 36px; }
.url { flex: 1; display: flex; align-items: center; height: 39px; padding: 0 21px; background: #fff; border: 1px solid #ccc; border-radius: 20px; color: #6b6b6b; font: 17px/20px "Open Sans", sans-serif; }
.urlrow .url { margin-left: -10px; }
.favs { margin-left: -10px; }
.copilot { margin-left: -6px; }
.url a { margin: 0 auto 0 19px; }
.url b { color: #111; font-weight: 400; }
.tr { margin: 0 28px 0 42px; font: 15px/20px "Open Sans", "Noto Sans CJK JP", sans-serif; }
.view { flex: 1; min-height: 0; display: flex; margin: 0 5px 3px; background: #e9f0f9; border-radius: 10px; overflow: hidden; border-bottom: 1px solid #ddd; font-family: Roboto, sans-serif; color: #212121; }
.page { flex: 1; min-width: 0; }
.scroll { width: 16px; padding-top: 14px; background: #eef3fa; }
.scroll i { display: block; height: 54px; background: #c4c4c4; border-top: 1px solid #aaa; }
.apphead { display: flex; align-items: center; height: 80px; padding: 0 25px 0 34px; background: #2098d6; color: #fff; }
h2 { font-size: 27px; line-height: 32px; margin-left: 36px; }
.rounds { display: flex; gap: 6px; margin-left: auto; }
.rounds button { width: 50px; height: 50px; border-radius: 50%; background: #fff; box-shadow: 0 3px 7px #1570a4; }
.rounds svg { width: 30px; height: 30px; }
.tools { display: flex; align-items: center; }
.tools button { width: 50px; }
.tools svg { width: 26px; height: 26px; }
.bar { width: 1px; height: 20px; background: #1671a6; margin: 0 10px 0 16px; }
.bar.second { margin: 0 9px; }
.tools .avatar { position: relative; width: 38px; height: 38px; margin-left: 5px; border-radius: 50%; background: #0f4257; }
.avatar::after { content: ""; position: absolute; right: -4px; bottom: -4px; width: 17px; height: 17px; border-radius: 50%; background: #00f000; border: 2px solid #fff; }
.subhead { position: relative; display: flex; align-items: center; height: 70px; padding: 0 31px 0 34px; background: #fff; box-shadow: 0 2px 3px #999; color: #555; }
h3 { font-size: 22px; line-height: 28px; margin-left: 36px; color: #212121; }
.edit { margin-left: auto; display: flex; gap: 24px; }
.edit svg { width: 26px; height: 28px; }
.cards { padding: 0 90px; }
.card { background: #fff; padding: 30px 60px 35px; margin-bottom: 20px; border-radius: 3px; box-shadow: 0 2px 3px #999; }
.card.first { padding-bottom: 43px; }
h4 { font-size: 20px; line-height: 24px; text-decoration: underline; text-decoration-skip-ink: none; text-underline-offset: 3px; }
.fields { display: grid; grid-template-columns: repeat(6, 1fr); gap: 52px 38px; margin: 29px -60px 0 0; }
.fields div { max-width: 210px; }
dt { font-size: 16px; line-height: 18px; font-weight: 500; color: #7a7a7a; }
dd { font-size: 20px; line-height: 24px; }
.pay { width: 100%; margin-top: 27px; table-layout: fixed; border-collapse: collapse; font-size: 20px; line-height: 24px; text-align: left; }
.pay th { height: 50px; padding: 0 20px; font-weight: 500; border-bottom: 1px solid #999; }
.pay td { height: 70px; padding: 0 20px; border-bottom: 1px solid #e0e0e0; color: #2bb073; }
.pay td:first-child { color: #212121; }
.pay .sum { background: #f4f4f4; }
.pay .sum td { border-bottom: 0; }
.pay .sum td:first-child { font-weight: 700; }
.p-a { width: 476px; } .p-b { width: 389px; } .p-c { width: 370px; }
```
